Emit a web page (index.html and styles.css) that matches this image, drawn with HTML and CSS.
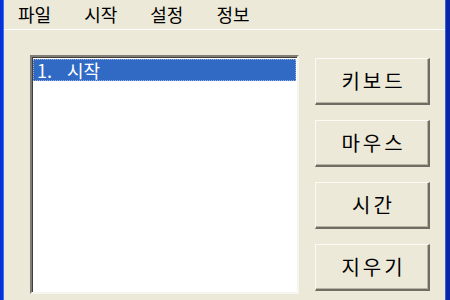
FILE: index.html
```html
<!DOCTYPE html>
<html lang="ko">
<head>
<meta charset="utf-8">
<link rel="stylesheet" href="styles.css">
</head>
<body>
<div class="window">
  <div class="frame-left"></div>
  <div class="client">
    <div class="menubar">
      <span class="menu-item">파일</span>
      <span class="menu-item">시작</span>
      <span class="menu-item">설정</span>
      <span class="menu-item">정보</span>
    </div>
    <div class="main">
      <div class="listbox">
        <div class="list-item selected"><span class="num">1.</span><span>시작</span></div>
      </div>
      <div class="buttons">
        <button class="btn">키보드</button>
        <button class="btn">마우스</button>
        <button class="btn">시간</button>
        <button class="btn">지우기</button>
      </div>
    </div>
  </div>
  <div class="frame-right"></div>
</div>
</body>
</html>
```
FILE: styles.css
```css
html, body {
  margin: 0;
  padding: 0;
  width: 450px;
  height: 300px;
  overflow: hidden;
  background: #ece9d8;
}
.window {
  display: flex;
  width: 450px;
  height: 300px;
  font-family: "Noto Sans CJK KR", "Liberation Sans", sans-serif;
  color: #000;
}
.frame-left {
  width: 4px;
  background: linear-gradient(to right, #0831d9 0, #0831d9 3px, #3d6fe8 3px);
}
.frame-right {
  width: 5px;
  background: linear-gradient(to right, #3a62d6 0, #3a62d6 1px, #0a25a8 1px);
}
.client {
  flex: 1;
  display: flex;
  flex-direction: column;
  background: #ece9d8;
}
.menubar {
  height: 29px;
  border-bottom: 1px solid #fff;
  display: flex;
  align-items: center;
  gap: 33px;
  padding-left: 14px;
  font-size: 18px;
  line-height: 1;
}
.menu-item {
  padding-bottom: 1px;
}
.main {
  flex: 1;
  display: flex;
  padding: 25px 0 0 26px;
}
.listbox {
  width: 269px;
  height: 239px;
  border-style: solid;
  border-width: 2px;
  border-color: #7f7d74 #f6f5ef #f6f5ef #7f7d74;
  box-shadow: inset 1px 1px 0 #3f3e3a;
  background: #fff;
  padding: 2px 0 0 1px;
  box-sizing: border-box;
}
.list-item {
  height: 22px;
  margin-right: 1px;
  display: flex;
  align-items: center;
  gap: 15px;
  padding-left: 4px;
  font-size: 18px;
  line-height: 1;
  box-sizing: border-box;
}
.list-item.selected {
  background: #316ac5;
  color: #fff;
  outline: 1px dotted #9db0d8;
  outline-offset: -1px;
}
.buttons {
  margin-left: 16px;
  margin-top: 3px;
  display: flex;
  flex-direction: column;
  gap: 15px;
}
.btn {
  width: 115px;
  height: 47px;
  background: #ece9d8;
  border-style: solid;
  border-width: 1px 2px 2px 1px;
  border-color: #fbfaf6 #6f6d64 #6f6d64 #fbfaf6;
  box-shadow: inset -1px -1px 0 #b8b4a2;
  font-family: "Noto Sans CJK KR", "Liberation Sans", sans-serif;
  font-size: 20px;
  letter-spacing: 3px;
  padding: 0 0 0 3px;
  color: #000;
  line-height: 1;
}
```
